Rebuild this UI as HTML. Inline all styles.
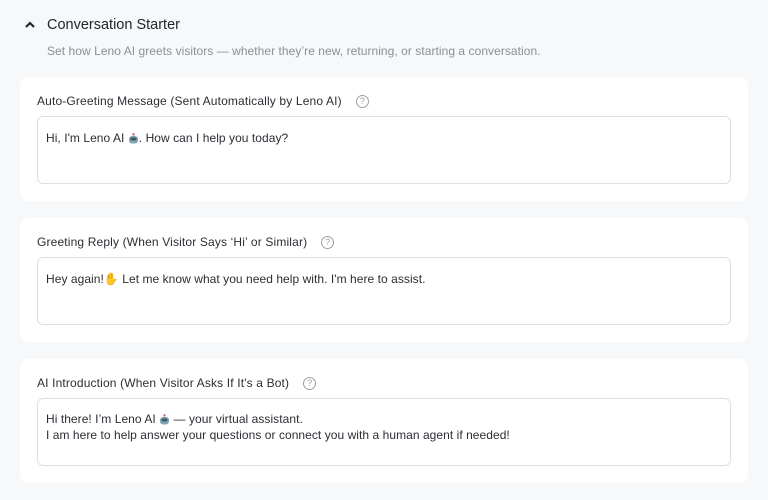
<!DOCTYPE html>
<html><head><meta charset="utf-8"><style>
*{box-sizing:border-box;margin:0;padding:0}
body{width:768px;height:500px;background:#f6f8fa;font-family:"Liberation Sans",Arial,sans-serif;position:relative;overflow:hidden;color:#1f2328}
.h{position:absolute;left:47px;top:17px;font-size:14.5px;color:#22262b}
.chev{position:absolute;left:24px;top:20px}
.sub{position:absolute;left:47px;top:44px;font-size:12px;color:#8a9097;letter-spacing:0.05px}
.card{position:absolute;left:20px;width:728px;height:124px;background:#fff;border-radius:8px}
.lab{position:absolute;left:17px;top:17px;font-size:12px;color:#2a2e33;display:flex;align-items:center;letter-spacing:0.15px}
.q{display:inline-block;width:13px;height:13px;border:1px solid #9aa0a6;border-radius:50%;font-size:9px;color:#9aa0a6;text-align:center;line-height:11px;margin-left:14px;letter-spacing:0}
.ta{position:absolute;left:17px;top:39px;width:694px;height:68px;border:1px solid #dcdfe3;border-radius:6px;padding:13px 8px;font-size:12px;line-height:16px;color:#2a2e33;letter-spacing:0.05px}
svg.r{vertical-align:-2px}
</style></head><body>
<svg class="chev" width="12" height="10" viewBox="0 0 12 10"><path d="M2 7 L6 3 L10 7" fill="none" stroke="#22262b" stroke-width="2.2"/></svg>
<div class="h">Conversation Starter</div>
<div class="sub">Set how Leno AI greets visitors — whether they’re new, returning, or starting a conversation.</div>

<div class="card" style="top:77px">
<div class="lab">Auto-Greeting Message (Sent Automatically by Leno AI)<span class="q">?</span></div>
<div class="ta">Hi, I'm Leno AI <svg class="r" width="11" height="11" viewBox="0 0 11 11"><rect x="5" y="0" width="1" height="2" fill="#6b7d86"/><circle cx="5.5" cy="1.5" r="1.2" fill="#e06a6a"/><rect x="1" y="3" width="9" height="7.5" rx="3" fill="#7fa7b3"/><rect x="2.5" y="4.5" width="6" height="3" rx="1.5" fill="#3f5a66"/></svg>. How can I help you today?</div>
</div>

<div class="card" style="top:218px">
<div class="lab">Greeting Reply (When Visitor Says ‘Hi’ or Similar)<span class="q">?</span></div>
<div class="ta">Hey again!<span style="color:#f0b840">✋</span> Let me know what you need help with. I'm here to assist.</div>
</div>

<div class="card" style="top:359px">
<div class="lab">AI Introduction (When Visitor Asks If It's a Bot)<span class="q">?</span></div>
<div class="ta" style="padding-top:12px">Hi there! I’m Leno AI <svg class="r" width="11" height="11" viewBox="0 0 11 11"><rect x="5" y="0" width="1" height="2" fill="#6b7d86"/><circle cx="5.5" cy="1.5" r="1.2" fill="#e06a6a"/><rect x="1" y="3" width="9" height="7.5" rx="3" fill="#7fa7b3"/><rect x="2.5" y="4.5" width="6" height="3" rx="1.5" fill="#3f5a66"/></svg> — your virtual assistant.<br>I am here to help answer your questions or connect you with a human agent if needed!</div>
</div>
</body></html>
